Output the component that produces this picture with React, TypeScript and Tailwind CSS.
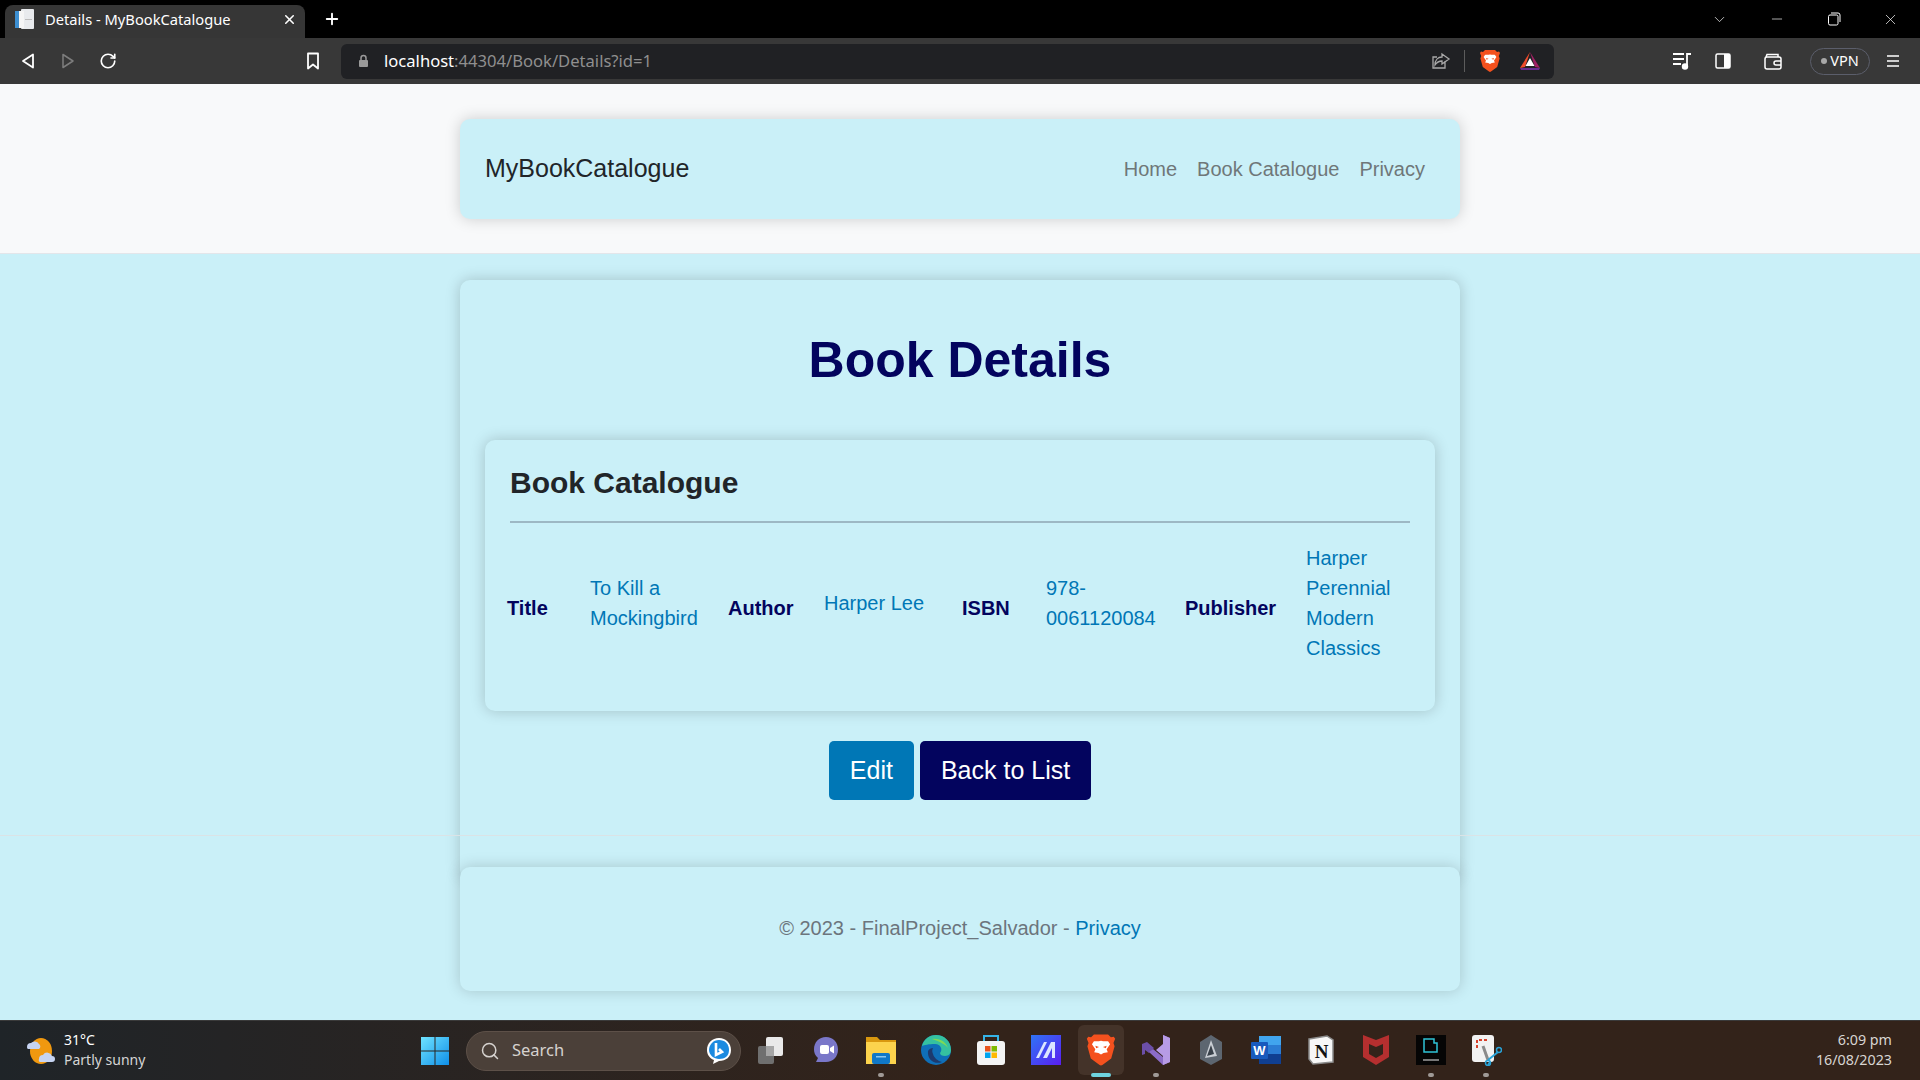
import { ChevronDown, Minus, Plus, RotateCw, Search, X } from "lucide-react";

const BraveIcon = ({ size }: { size: number }) => (
  <svg width={size} height={size} viewBox="0 0 24 24">
    <path
      fill="#f4511e"
      d="M12 1h5l2 2 2-.4 1 1.400-1.200 3 .8 2.400-2.400 8.600L13 22.600 12 23l-1-.4-6.200-4.600L2.400 9.400l.8-2.400L2 4l1-1.400 2 .4 2-2z"
    />
    <path
      fill="#fff"
      d="M12 5.500c2 .6 3.600.2 5 .4l1.400 2-2.400 3.600.8 2-3 .6-1.800 1-1.800-1-3-.6.800-2L5.600 7.900l1.400-2c1.400-.2 3 .2 5-.4z"
    />
    <path fill="#f4511e" d="M9 17l3-1.200L15 17l-3 2.600zM8 9l2.600.8-2 1zM16 9l-2.600.8 2 1z" />
  </svg>
);

const WindowsLogo = () => (
  <svg width="30" height="30" viewBox="0 0 30 30">
    <defs>
      <linearGradient id="win" x1="0" y1="0" x2="1" y2="1">
        <stop offset="0" stopColor="#6fe3ff" />
        <stop offset="1" stopColor="#0f8fe8" />
      </linearGradient>
    </defs>
    <path fill="url(#win)" d="M1 1h13.500v13.500H1zM15.500 1H29v13.500H15.500zM1 15.500h13.500V29H1zM15.500 15.500H29V29H15.500z" />
  </svg>
);

const taskbarIcons = [
  {
    key: "views",
    running: false,
    icon: (
      <svg width="32" height="32" viewBox="0 0 32 32">
        <rect x="3" y="12" width="16" height="18" rx="2" fill="#6f6f6f" />
        <rect x="11" y="3" width="17" height="19" rx="2" fill="#e9e9e9" />
        <rect x="11" y="12" width="8" height="10" fill="#a5a5a5" />
      </svg>
    ),
  },
  {
    key: "teams",
    running: false,
    icon: (
      <svg width="32" height="32" viewBox="0 0 32 32">
        <path fill="#7a77c9" d="M16 3c7 0 12 5 12 12.500S23 28 16 28H6l2-4c-3-2.500-4-5.500-4-8.500C4 8 9 3 16 3z" />
        <rect x="10" y="11" width="9" height="9" rx="2" fill="#fff" />
        <path fill="#fff" d="M20 14l4-2.500v8L20 17z" />
      </svg>
    ),
  },
  {
    key: "files",
    running: true,
    icon: (
      <svg width="32" height="32" viewBox="0 0 32 32">
        <path fill="#d9980f" d="M1 3h11l3 3h16v5H1z" />
        <path fill="#fcd34d" d="M1 8h30v22H1z" />
        <rect x="7" y="19" width="18" height="11" rx="2" fill="#1078c8" />
        <rect x="11" y="22" width="10" height="1.500" fill="#8cc8f0" />
      </svg>
    ),
  },
  {
    key: "edge",
    running: false,
    icon: (
      <svg width="32" height="32" viewBox="0 0 32 32">
        <circle cx="16" cy="16" r="15" fill="#0f6fb8" />
        <path fill="#35c1a0" d="M2 12C4 5 9 1 16 1c8 0 15 6 15 15 0 3-2 6-6 6-3 0-5-1-5-3 3-3 1-9-5-9-6 0-11 1-13 2z" />
        <path fill="#7ed957" d="M12 5c8-1 14 3 16 9-3-4-8-6-16-9z" />
        <path fill="#1d3a6e" d="M13 20c1 4 5 7 9 8-7 3-15-2-14-11 1-2 3-3 5-3-1 2-1 4 0 6z" />
      </svg>
    ),
  },
  {
    key: "store",
    running: false,
    icon: (
      <svg width="32" height="32" viewBox="0 0 32 32">
        <path fill="none" stroke="#35b4e8" strokeWidth="2" d="M9 8V2h14v6" />
        <rect x="2" y="7" width="28" height="24" rx="3" fill="#f4f4f4" />
        <rect x="10" y="12" width="5.500" height="5.500" fill="#e8541e" />
        <rect x="16.500" y="12" width="5.500" height="5.500" fill="#7fba00" />
        <rect x="10" y="18.500" width="5.500" height="5.500" fill="#00a4ef" />
        <rect x="16.500" y="18.500" width="5.500" height="5.500" fill="#ffb900" />
      </svg>
    ),
  },
  {
    key: "mail",
    running: false,
    icon: (
      <svg width="32" height="32" viewBox="0 0 32 32">
        <defs>
          <linearGradient id="mn" x1="0" y1="0" x2="1" y2="1">
            <stop offset="0" stopColor="#2f74f5" />
            <stop offset="1" stopColor="#5a1ef0" />
          </linearGradient>
        </defs>
        <rect x="1" y="1" width="30" height="30" fill="url(#mn)" />
        <path fill="#dbe6ff" d="M6 24l8-16h3l-8 16zM13 24l8-16h4v16h-3V14l-5 10z" />
      </svg>
    ),
  },
  {
    key: "brave",
    running: false,
    active: true,
    icon: <BraveIcon size={34} />,
  },
  {
    key: "vs",
    running: true,
    icon: (
      <svg width="32" height="32" viewBox="0 0 32 32">
        <path fill="#6c4fa8" d="M2 10l5-2 7 6-5 5-4-3v4l-3 1z" />
        <path fill="#8c6cc8" d="M23 1l7 3v24l-7 3-14-13 4-3 10 8z" />
        <path fill="#b79be6" d="M23 1l7 3v24l-7 3V22l-7-6 7-6z" />
      </svg>
    ),
  },
  {
    key: "unity",
    running: false,
    icon: (
      <svg width="32" height="32" viewBox="0 0 32 32">
        <path fill="#5d6670" d="M16 1l11 7v17l-11 6-11-6V8z" />
        <path fill="#c9ced4" d="M16 6l6 16-12 2z" />
        <path fill="#39414a" d="M16 11l3 9-7 2z" />
      </svg>
    ),
  },
  {
    key: "word",
    running: false,
    icon: (
      <svg width="32" height="32" viewBox="0 0 32 32">
        <rect x="9" y="2" width="22" height="9" fill="#41a5ee" />
        <rect x="9" y="11" width="22" height="9" fill="#2b7cd3" />
        <rect x="9" y="20" width="22" height="10" fill="#103f91" />
        <rect x="1" y="8" width="17" height="17" rx="1" fill="#185abd" />
        <text x="9.500" y="21" textAnchor="middle" fontSize="13" fontWeight="700" fill="#fff" fontFamily="Liberation Sans">
          W
        </text>
      </svg>
    ),
  },
  {
    key: "notion",
    running: false,
    icon: (
      <svg width="32" height="32" viewBox="0 0 32 32">
        <path fill="#f7f7f7" stroke="#8a8a8a" strokeWidth="1.500" d="M4 5l18-3 6 4v22l-20 2-4-5z" />
        <text x="16.500" y="24" textAnchor="middle" fontSize="19" fontWeight="700" fill="#111" fontFamily="Liberation Serif">
          N
        </text>
      </svg>
    ),
  },
  {
    key: "mcafee",
    running: false,
    icon: (
      <svg width="32" height="32" viewBox="0 0 32 32">
        <path fill="#b52f2f" d="M3 1l13 5 13-5v22l-13 8-13-8zM9 10v10l7 4 7-4V10l-7 3z" fillRule="evenodd" />
      </svg>
    ),
  },
  {
    key: "recorder",
    running: true,
    icon: (
      <svg width="32" height="32" viewBox="0 0 32 32">
        <rect x="1" y="1" width="30" height="30" fill="#050505" />
        <path fill="none" stroke="#2fc4d6" strokeWidth="1.500" d="M9 5h10v4h3v9H9z" />
        <rect x="8" y="25" width="16" height="2" fill="#777" />
      </svg>
    ),
  },
  {
    key: "snip",
    running: true,
    icon: (
      <svg width="32" height="32" viewBox="0 0 32 32">
        <rect x="2" y="1" width="22" height="27" rx="3" fill="#f2f2f2" />
        <path fill="none" stroke="#d9412b" strokeWidth="2" strokeDasharray="3 2" d="M7 14V6h10" />
        <path fill="none" stroke="#8a8a8a" strokeWidth="3" d="M13 12l5 14" />
        <path fill="none" stroke="#29a3d8" strokeWidth="2" d="M18 26l10-8M20 28l-2 3" />
        <circle cx="29" cy="16" r="2.500" fill="none" stroke="#29a3d8" strokeWidth="1.500" />
        <circle cx="18" cy="29" r="2.500" fill="none" stroke="#29a3d8" strokeWidth="1.500" />
      </svg>
    ),
  },
];

const BrowserChrome = () => (
  <div className="shrink-0 font-['Noto_Sans',sans-serif] text-white">
    <div className="flex h-[38px] items-end bg-black">
      <div className="ml-[5px] flex h-[33px] w-[300px] items-center rounded-t-lg bg-[#363636] pb-[5px] pl-[8px]">
        <svg width="22" height="22" viewBox="0 0 22 22">
          <rect x="8" y="1" width="13" height="20" rx="1" fill="#e8eaed" />
          <rect x="2" y="3" width="9" height="17" fill="#f5f5f5" />
          <rect x="2" y="3" width="4" height="17" fill="#3d8fd1" />
          <rect x="12" y="11" width="7" height="1" fill="#bbb" />
        </svg>
        <span className="ml-[10px] w-[237px] whitespace-nowrap text-[14.700px]">Details - MyBookCatalogue</span>
        <X size={15} strokeWidth={2.5} />
      </div>
      <div className="flex h-[33px] items-center pb-[5px] pl-[18px]">
        <Plus size={18} strokeWidth={2.5} />
      </div>
      <div className="flex h-[38px] flex-1 items-center justify-end pr-[1px]">
        <ChevronDown size={17} strokeWidth={1} />
        <div className="ml-[20px] flex w-[57px] justify-center">
          <Minus size={16} strokeWidth={1} />
        </div>
        <div className="flex w-[57px] justify-center">
          <svg width="14" height="14" viewBox="0 0 14 14" fill="none" stroke="#fff" strokeWidth="1">
            <rect x="1.500" y="3" width="9.500" height="10" rx="1.500" />
            <path d="M4 1h7a2 2 0 0 1 2 2v7" />
          </svg>
        </div>
        <div className="flex w-[57px] justify-center">
          <X size={17} strokeWidth={1} />
        </div>
      </div>
    </div>
    <div className="flex h-[46px] items-center bg-[#383838] pl-[8px]">
      <div className="flex w-[40px] justify-center">
        <svg width="14" height="16" viewBox="0 0 14 16" fill="none" stroke="#fff" strokeWidth="1.800" strokeLinejoin="round">
          <path d="M12 1.500v13L2 8z" />
        </svg>
      </div>
      <div className="flex w-[40px] justify-center">
        <svg width="14" height="16" viewBox="0 0 14 16" fill="none" stroke="#7d7d7d" strokeWidth="1.500" strokeLinejoin="round">
          <path d="M2 1.500v13L12 8z" />
        </svg>
      </div>
      <div className="flex w-[40px] justify-center">
        <RotateCw size={18} strokeWidth={2.2} />
      </div>
      <div className="ml-[165px] flex w-[40px] justify-center">
        <svg width="14" height="18" viewBox="0 0 14 18" fill="none" stroke="#fff" strokeWidth="1.800" strokeLinejoin="round">
          <path d="M2 1.500h10v15l-5-4-5 4z" />
        </svg>
      </div>
      <div className="ml-[8px] flex h-[35px] w-[1213px] items-center rounded-md bg-[#202124] pl-[17px]">
        <svg width="11" height="14" viewBox="0 0 11 14">
          <path fill="none" stroke="#9a9a9a" strokeWidth="1.500" d="M3 6V4a2.500 2.500 0 0 1 5 0v2" />
          <rect x="1" y="6" width="9" height="7" rx="1" fill="#9a9a9a" />
        </svg>
        <span className="ml-[15px] w-[1047px] whitespace-nowrap text-[16.600px] text-[#8f8f8f]">
          <span className="text-white">localhost</span>:44304/Book/Details?id=1
        </span>
        <svg width="20" height="20" viewBox="0 0 20 20" fill="none" stroke="#a9a9a9" strokeWidth="1.300">
          <path d="M14 10v7H2V6h4M11 3l7 5-7 5v-3c-3 0-5 1-7 4 0-5 3-8 7-8z" />
        </svg>
        <div className="ml-[13px] h-[22px] w-[1px] bg-[#5c5c5c]" />
        <div className="ml-[13px]">
          <BraveIcon size={24} />
        </div>
        <svg className="ml-[17px]" width="22" height="20" viewBox="0 0 22 20">
          <path fill="#ef4b2a" d="M11 1L1 17l5-1 5-15z" />
          <path fill="#9e1f63" d="M11 1l10 16-5-1z" />
          <path fill="#662d91" d="M1 17h20l-1 2H2z" />
          <path fill="#fff" d="M11 7l4.500 8h-9z" />
        </svg>
      </div>
      <div className="ml-[108px] flex w-[40px] justify-center">
        <svg width="20" height="18" viewBox="0 0 20 18" fill="none" stroke="#fff" strokeWidth="1.800">
          <path d="M1 2h11M1 7h11M1 12h8M15 14V2h4" />
          <circle cx="13" cy="14.500" r="2.300" fill="#fff" />
        </svg>
      </div>
      <div className="ml-[1px] flex w-[40px] justify-center">
        <svg width="16" height="16" viewBox="0 0 16 16">
          <rect x="1" y="1" width="14" height="14" rx="1.500" fill="none" stroke="#fff" strokeWidth="1.500" />
          <rect x="9" y="1" width="6" height="14" fill="#fff" />
        </svg>
      </div>
      <div className="ml-[10px] flex w-[40px] justify-center">
        <svg width="18" height="17" viewBox="0 0 18 17" fill="none" stroke="#fff" strokeWidth="1.500">
          <rect x="1" y="4" width="16" height="12" rx="2" />
          <path d="M2 4l1-2.500h11V4M17 8h-5a2 2 0 0 0 0 4h5" />
        </svg>
      </div>
      <div className="ml-[17px] flex h-[27px] w-[60px] items-center justify-center rounded-full border border-[#5b5e6b] text-[14.500px]">
        <span className="mr-[3px] h-[6px] w-[6px] rounded-full bg-[#a8a8a8]" />
        VPN
      </div>
      <div className="ml-[8px] flex w-[30px] justify-center">
        <svg width="14" height="14" viewBox="0 0 14 14" stroke="#fff" strokeWidth="1.500">
          <path d="M1 2h12M1 7h12M1 12h12" />
        </svg>
      </div>
    </div>
  </div>
);

const Detail = ({ label, value }: { label: string; value: string }) => (
  <>
    <div className="mt-[10px] font-bold text-[#03045e]">{label}</div>
    <div className="text-[#0077b6]">{value}</div>
  </>
);

const Taskbar = () => (
  <div className="flex h-[60px] shrink-0 items-center border-t border-[#3a3a3a] bg-gradient-to-r from-[#1f2428] via-[#33231a] to-[#33231a] font-['Noto_Sans',sans-serif] text-white">
    <div className="flex w-[420px] items-center pl-[24px]">
      <svg width="32" height="32" viewBox="0 0 32 32">
        <ellipse cx="17" cy="16" rx="11" ry="13" fill="#f0980f" />
        <path fill="#c6d4f2" d="M3 12a4 4 0 0 1 4-4 5 5 0 0 1 8 1 3 3 0 0 1 0 5H4a2 2 0 0 1-1-2zM15 24a4 4 0 0 1 4-4 5 5 0 0 1 9 1 3 3 0 0 1 0 6H17a2 2 0 0 1-2-3z" />
      </svg>
      <div className="-mt-[2px] ml-[8px] text-[14px] leading-[20px]">
        <div>31°C</div>
        <div className="text-[#d5d5d5]">Partly sunny</div>
      </div>
    </div>
    <WindowsLogo />
    <div className="ml-[16px] flex h-[40px] w-[275px] items-center rounded-full border border-[#5d5048] bg-[#4b4039] pl-[13px] text-[#d6d2cf]">
      <Search size={20} strokeWidth={1.8} />
      <span className="ml-[12px] flex-1 text-[16.500px]">Search</span>
      <svg className="mr-[8px]" width="26" height="28" viewBox="0 0 26 28">
        <path fill="#fff" d="M13 1c7 0 12 5 12 12s-5 11-12 11l-6 3 1-4C3 21 1 17 1 13 1 6 6 1 13 1z" />
        <path fill="#1b8ae0" d="M13 3c6 0 10 4 10 10s-4 9-10 9c-5 0-10-4-10-9S7 3 13 3z" />
        <path fill="none" stroke="#fff" strokeWidth="2.600" d="M10 6v12l6-3-3-3" />
      </svg>
    </div>
    <div className="ml-[2px] flex">
      {taskbarIcons.map((item) => (
        <div key={item.key} className="relative flex h-[58px] w-[55px] items-center justify-center pb-[2px]">
          {item.active && <div className="absolute h-[50px] w-[46px] rounded-md bg-[#443329]" />}
          <div className="relative flex">{item.icon}</div>
          {item.running && (
            <div className="absolute bottom-[3px] h-[4px] w-[6px] rounded-full bg-[#a09a96]" />
          )}
          {item.active && (
            <div className="absolute bottom-[3px] h-[4px] w-[20px] rounded-full bg-[#6fd3de]" />
          )}
        </div>
      ))}
    </div>
    <div className="-mt-[2px] flex-1 pr-[28px] text-right text-[14.300px] leading-[20px] text-[#d8d5d2]">
      <div>6:09 pm</div>
      <div>16/08/2023</div>
    </div>
  </div>
);

export default function App() {
  return (
    <div className="flex h-screen w-full flex-col overflow-hidden bg-[#caf0f8] font-['Liberation_Sans',Arial,sans-serif]">
      <BrowserChrome />
      <div className="flex-1">
        <header className="h-[170px] border-b border-[#e3e6ea] bg-[#f8f9fa] pt-[35px]">
          <nav className="mx-auto flex h-[100px] w-[1000px] items-center justify-between rounded-[10px] bg-[#caf0f8] pl-[25px] pr-[35px] shadow-[0_0_15px_rgba(0,0,0,0.18)]">
            <a className="text-[25px] text-[#212529]">MyBookCatalogue</a>
            <div className="flex gap-[20px] text-[20px] text-[#6f7779]">
              <a>Home</a>
              <a>Book Catalogue</a>
              <a>Privacy</a>
            </div>
          </nav>
        </header>
        <main className="h-[626px] pt-[26px]">
          <div className="mx-auto h-[600px] w-[1000px] rounded-[10px] bg-[#caf0f8] px-[25px] pt-[50px] shadow-[0_0_15px_rgba(0,0,0,0.2)]">
            <h1 className="mb-[50px] text-center text-[50px] font-bold leading-[60px] text-[#03045e]">Book Details</h1>
            <section className="h-[271px] rounded-[10px] bg-[#caf0f8] px-[25px] pt-[25px] text-[20px] leading-[30px] shadow-[0_0_15px_rgba(0,0,0,0.2)]">
              <h2 className="text-[30px] font-bold leading-[36px] text-[#212529]">Book Catalogue</h2>
              <hr className="mt-[20px] h-[2px] border-0 bg-[#9db8c4]" />
              <div className="-ml-[3px] mt-[20px] grid grid-cols-[83px_138px_96px_138px_84px_139px_121px_105px] items-center">
                <Detail label="Title" value="To Kill a Mockingbird" />
                <Detail label="Author" value="Harper Lee" />
                <Detail label="ISBN" value="978-0061120084" />
                <Detail label="Publisher" value="Harper Perennial Modern Classics" />
              </div>
            </section>
            <div className="mt-[30px] flex justify-center gap-[6px] text-[25px] text-white">
              <button className="h-[59px] rounded-[5px] bg-[#0077b6] px-[21px]">Edit</button>
              <button className="h-[59px] rounded-[5px] bg-[#03045e] px-[21px]">Back to List</button>
            </div>
          </div>
        </main>
        <footer className="relative -mt-[45px] h-[185px] border-t border-[#dbe3e6] pt-[31px]">
          <div className="mx-auto flex h-[124px] w-[1000px] items-center justify-center rounded-[10px] bg-[#caf0f8] pb-[2px] text-[20px] text-[#6c757d] shadow-[0_0_15px_rgba(0,0,0,0.18)]">
            <span>
              © 2023 - FinalProject_Salvador - <a className="text-[#0077b6]">Privacy</a>
            </span>
          </div>
        </footer>
      </div>
      <Taskbar />
    </div>
  );
}
